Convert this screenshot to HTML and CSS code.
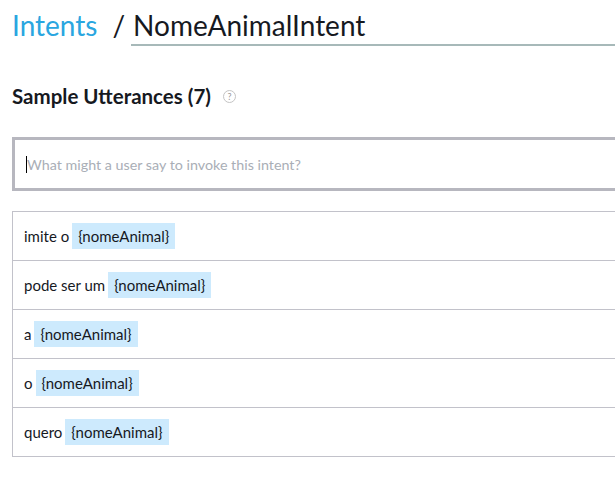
FILE: index.html
```html
<!DOCTYPE html>
<html>
<head>
<meta charset="utf-8">
<link rel="stylesheet" href="styles.css">
</head>
<body>
<div class="page">
  <div class="crumbs">
    <span class="crumb-link">Intents</span>
    <span class="crumb-sep">/</span>
    <div class="crumb-name">NomeAnimalIntent</div>
  </div>
  <div class="section-title">
    <span>Sample Utterances (7)</span>
    <span class="help">?</span>
  </div>
  <div class="utter-input">
    <span class="caret"></span><span class="placeholder">What might a user say to invoke this intent?</span>
  </div>
  <ul class="utter-list">
    <li class="utter-row"><span class="word">imite o</span><span class="slot">{nomeAnimal}</span></li>
    <li class="utter-row"><span class="word">pode ser um</span><span class="slot">{nomeAnimal}</span></li>
    <li class="utter-row"><span class="word">a</span><span class="slot">{nomeAnimal}</span></li>
    <li class="utter-row"><span class="word">o</span><span class="slot">{nomeAnimal}</span></li>
    <li class="utter-row"><span class="word">quero</span><span class="slot">{nomeAnimal}</span></li>
  </ul>
</div>
</body>
</html>
```

FILE: styles.css
```css
html, body {
  margin: 0;
  padding: 0;
  background: #ffffff;
  overflow: hidden;
}
body {
  font-family: Lato, "Open Sans", sans-serif;
  color: #16191f;
}
.page {
  padding-left: 12px;
  width: 720px;
}
.crumbs {
  display: flex;
  align-items: flex-end;
  height: 46px;
  font-size: 28px;
}
.crumb-link {
  color: #2aa6e0;
  line-height: 34px;
  padding-bottom: 4px;
}
.crumb-sep {
  margin-left: 15px;
  color: #16191f;
  line-height: 34px;
  padding-bottom: 4px;
}
.crumb-name {
  margin-left: 6px;
  flex: 1;
  line-height: 34px;
  padding-left: 2px;
  padding-bottom: 2px;
  border-bottom: 2px solid #a7b9b9;
}
.section-title {
  display: flex;
  align-items: center;
  margin-top: 35px;
  font-size: 20.5px;
  font-weight: bold;
  height: 30px;
}
.help {
  margin-left: 12px;
  width: 11px;
  height: 11px;
  border: 1px solid #c4c4c4;
  border-radius: 50%;
  font-size: 9px;
  font-weight: normal;
  color: #9a9a9a;
  display: flex;
  align-items: center;
  justify-content: center;
  line-height: 1;
}
.utter-input {
  margin-top: 26px;
  height: 48px;
  border: 3px solid #b7b7bf;
  border-right: none;
  display: flex;
  align-items: center;
  padding-left: 11px;
  font-size: 14.3px;
}
.caret {
  width: 1px;
  height: 17px;
  background: #000;
}
.placeholder {
  color: #a9aeb6;
}
.utter-list {
  list-style: none;
  margin: 20px 0 0 0;
  padding: 0;
  border-left: 1px solid #c2c2ca;
}
.utter-row {
  height: 48px;
  border-top: 1px solid #c2c2ca;
  display: flex;
  align-items: center;
  padding-left: 11px;
  font-size: 15px;
}
.utter-row:last-child {
  border-bottom: 1px solid #c2c2ca;
}
.word {
  margin-right: 3px;
}
.slot {
  background: #cdeafd;
  padding: 0 6px;
  line-height: 26px;
}
```
